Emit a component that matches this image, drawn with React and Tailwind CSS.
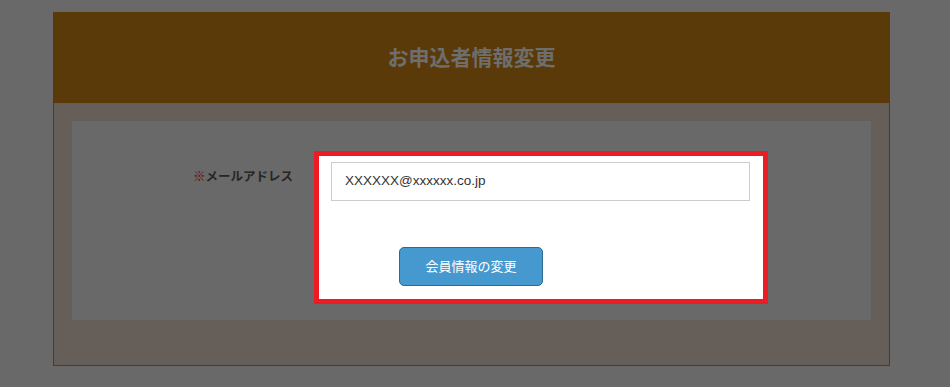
export default function App() {
  return (
    <div className="min-h-[387px] w-full bg-[#696969] pt-3 font-['Liberation_Sans','Noto_Sans_CJK_JP',sans-serif]">
      <div className="ml-[53px] w-[837px]">
        <div className="flex h-[91px] items-center justify-center bg-[#5a3a08]">
          <h1 className="text-[21px] font-bold text-[#6e6e6e]">お申込者情報変更</h1>
        </div>
        <div className="border-x border-b border-[#5a3a08] bg-[#665e58] px-[18px] pt-[18px] pb-[45px]">
          <div className="h-[199px] bg-[#696969] pt-[30px]">
            <div className="flex">
              <div className="w-[242px] pl-[121px] pt-[17px] text-[12.5px] font-bold text-[#262626]">
                <span className="text-[#6e0a0a]">※</span>メールアドレス
              </div>
              <div className="w-[454px] border-[5px] border-[#ed1c24] bg-white pl-[12px] pr-[13px] pt-[6px] pb-[13px]">
                <div className="flex h-[39px] items-center border border-[#cccccc] px-[13px] text-[13.5px] text-[#333333]">
                  XXXXXX@xxxxxx.co.jp
                </div>
                <button className="mt-[46px] ml-[68px] flex h-[39px] w-[144px] items-center justify-center rounded-[5px] border border-[#2e6b8e] bg-[#4699cf] text-[13px] text-white">
                  会員情報の変更
                </button>
              </div>
            </div>
          </div>
        </div>
      </div>
    </div>
  )
}
